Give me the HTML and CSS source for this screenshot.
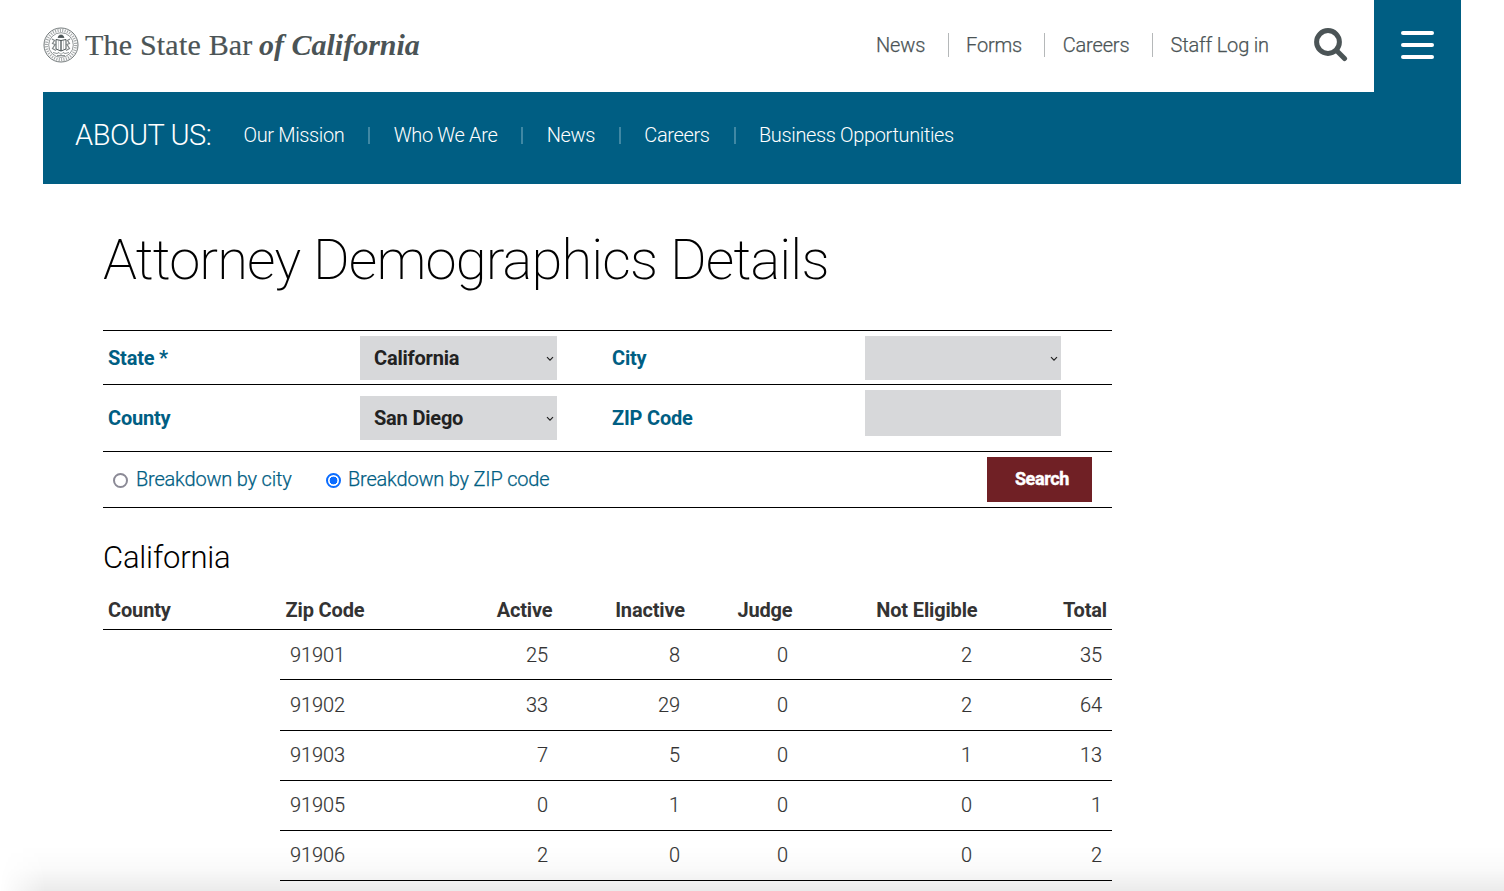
FILE: index.html
```html
<!DOCTYPE html>
<html lang="en">
<head>
<meta charset="utf-8">
<title>Attorney Demographics Details</title>
<link rel="stylesheet" href="styles.css">
</head>
<body>
<div class="page">
  <header class="header">
    <a class="brand">
      <svg class="seal" viewBox="0 0 36 36" fill="none" stroke="#4b5456">
        <circle cx="18" cy="18" r="17" stroke-width=".8"/>
        <circle cx="18" cy="18" r="14.6" stroke-width="3" stroke-dasharray="1.1 1.3" opacity=".5"/>
        <circle cx="18" cy="18" r="12.3" stroke-width=".6"/>
        <path d="M9 12l2.500 1.500-2 3 2.500 1-2.500 4 3.500 2M27 12l-2.500 1.500 2 3-2.500 1 2.500 4-3.500 2" stroke-width="1.200" opacity=".7"/>
        <path d="M13 12.500l5 1 5-1v9.500l-5 2-5-2z" fill="#fff" stroke-width="1"/>
        <path d="M18 13.500v10.500" stroke-width="1.300"/>
        <path d="M15.500 13.500v8.500M20.500 13.500v8.500" stroke-width=".5" opacity=".6"/>
        <path d="M15 10.500q1-3 3-2.500 2-.5 3 2.500z" fill="#4b5456" stroke-width=".8"/>
        <path d="M10 25.500l4 1 2-1 2 2 2-2 2 1 4-1M14 28.500h8" stroke-width=".9" opacity=".7"/>
      </svg>
      <span class="brand-name">The State Bar</span><span class="brand-place">of California</span>
    </a>
    <nav class="top-nav">
      <a class="top-link link-news">News</a>
      <a class="top-link link-forms">Forms</a>
      <a class="top-link link-careers">Careers</a>
      <a class="top-link link-staff">Staff Log in</a>
    </nav>
    <svg class="search-icon" viewBox="0 0 34 34" fill="none" stroke="#4b5456">
      <circle cx="14" cy="14" r="11.400" stroke-width="5"/>
      <path d="M22.500 22.500L30.500 30.500" stroke-width="5" stroke-linecap="round"/>
    </svg>
    <div class="menu"><span class="bar"></span><span class="bar"></span><span class="bar"></span></div>
  </header>
  <nav class="about">
    <span class="about-title">ABOUT US:</span>
    <a class="about-link">Our Mission</a><span class="pipe"></span>
    <a class="about-link">Who We Are</a><span class="pipe"></span>
    <a class="about-link">News</a><span class="pipe"></span>
    <a class="about-link">Careers</a><span class="pipe"></span>
    <a class="about-link">Business Opportunities</a>
  </nav>
  <main class="content">
    <h1 class="title">Attorney Demographics Details</h1>
    <form class="filters">
      <div class="row row-state">
        <label class="label">State *</label>
        <div class="field"><span>California</span><svg class="chev" viewBox="0 0 8 6"><path d="M1 1.200l3 3 3-3" fill="none" stroke="#222" stroke-width="1.200"/></svg></div>
        <label class="label label-right">City</label>
        <div class="field"><span></span><svg class="chev" viewBox="0 0 8 6"><path d="M1 1.200l3 3 3-3" fill="none" stroke="#222" stroke-width="1.200"/></svg></div>
      </div>
      <div class="row row-county">
        <label class="label">County</label>
        <div class="field"><span>San Diego</span><svg class="chev" viewBox="0 0 8 6"><path d="M1 1.200l3 3 3-3" fill="none" stroke="#222" stroke-width="1.200"/></svg></div>
        <label class="label label-right">ZIP Code</label>
        <div class="field field-zip"></div>
      </div>
      <div class="row-options">
        <span class="radio"></span><label class="option option-city">Breakdown by city</label>
        <span class="radio radio-on"></span><label class="option option-zip">Breakdown by ZIP code</label>
        <button class="search-button" type="button">Search</button>
      </div>
    </form>
    <h2 class="region">California</h2>
    <div class="table">
      <div class="thead"><span class="left">County</span><span class="left">Zip Code</span><span>Active</span><span>Inactive</span><span>Judge</span><span>Not Eligible</span><span>Total</span></div>
      <div class="trow"><span class="left">91901</span><span>25</span><span>8</span><span>0</span><span>2</span><span>35</span></div>
      <div class="trow"><span class="left">91902</span><span>33</span><span>29</span><span>0</span><span>2</span><span>64</span></div>
      <div class="trow trow-tight"><span class="left">91903</span><span>7</span><span>5</span><span>0</span><span>1</span><span>13</span></div>
      <div class="trow trow-tight"><span class="left">91905</span><span>0</span><span>1</span><span>0</span><span>0</span><span>1</span></div>
      <div class="trow trow-tight"><span class="left">91906</span><span>2</span><span>0</span><span>0</span><span>0</span><span>2</span></div>
    </div>
  </main>
</div>
<div class="edge-shade"></div>
</body>
</html>
```

FILE: styles.css
```css
* { box-sizing: border-box; }
body {
  margin: 0;
  height: 891px;
  overflow: hidden;
  background: #fff;
  color: #333;
  font-family: Roboto, "Liberation Sans", sans-serif;
  font-size: 20px;
  font-weight: 300;
}
.page { width: 1418px; margin-left: 43px; }
.header { display: flex; height: 92px; }
.brand {
  display: flex;
  width: 833px;
  height: 90px;
  align-items: center;
  color: #4b5456;
  font-family: "Liberation Serif", serif;
  font-size: 30px;
  font-weight: 400;
  white-space: nowrap;
}
.seal { width: 36px; height: 36px; margin-right: 6px; }
.brand-name { width: 174px; letter-spacing: .2px; -webkit-text-stroke: .2px #4b5456; }
.brand-place { font-style: italic; font-weight: 700; }
.top-nav { display: flex; height: 24px; margin-top: 33px; width: 438px; line-height: 24px; color: #4b5456; white-space: nowrap; letter-spacing: -.16px; -webkit-text-stroke: .25px; }
.top-link + .top-link { border-left: 1px solid #b5b8b9; padding-left: 17px; }
.link-news { width: 72px; }
.link-forms { width: 96px; }
.top-nav .link-careers { width: 108px; padding-left: 17.700px; }
.top-nav .link-staff { padding-left: 17.500px; }
.search-icon { width: 34px; height: 34px; margin-top: 28px; }
.menu {
  display: flex;
  flex-direction: column;
  gap: 8px;
  width: 87px;
  height: 92px;
  margin-left: auto;
  padding: 31px 0 0 27px;
  background: #005e83;
}
.bar { width: 33px; height: 4px; border-radius: 2px; background: #fff; }
.about { display: flex; height: 92px; padding-left: 32px; background: #005e83; color: #fff; line-height: 86px; white-space: nowrap; letter-spacing: -.36px; }
.about-title { width: 168.500px; font-size: 29px; letter-spacing: -.5px; }
.pipe { width: 2px; height: 17px; margin: 35px 23.300px 0 24px; background: #4088a4; }
.content { width: 1009px; margin-left: 60px; }
.title { height: 146px; margin: 0; padding-top: 43px; color: #000; font-size: 56px; font-weight: 200; line-height: 66px; white-space: nowrap; letter-spacing: -.85px; }
.filters { border-top: 1px solid #000; color: #005e83; }
.row { display: grid; grid-template-columns: 257px 197px 308px 196px; border-bottom: 1px solid #000; }
.row-state { height: 54px; padding-top: 5px; }
.row-county { height: 67px; padding-top: 5px; }
.label { padding-left: 5px; font-weight: 700; line-height: 44px; letter-spacing: -.2px; }
.label-right { padding-left: 55px; }
.row-county .label { line-height: 56px; }
.field { display: flex; align-items: center; justify-content: space-between; height: 44px; padding: 0 3.500px 0 14px; background: #d7d8da; color: #222; font-weight: 700; letter-spacing: -.2px; }
.row-county .field { margin-top: 6px; }
.row-county .field-zip { height: 46px; margin-top: 0; }
.chev { width: 8px; height: 6px; margin-top: 1px; }
.row-options { display: flex; height: 56px; padding: 5px 20px 0 10px; border-bottom: 1px solid #000; line-height: 44px; }
.radio { width: 15px; height: 15px; margin: 16px 8px 0 0; border: 2px solid #8b8a96; border-radius: 50%; background: #fff; }
.radio-on { margin-right: 7px; border-color: #0a6cff; background: radial-gradient(circle, #0a6cff 3.600px, #fff 4.200px); }
.option { letter-spacing: -.2px; -webkit-text-stroke: .25px; }
.option-city { width: 190px; }
.search-button { width: 105px; height: 45px; margin-left: auto; padding: 0 0 2px 5px; border: 0; background: #702025; color: #fff; font: 700 18px/43px Roboto, sans-serif; letter-spacing: -.35px; -webkit-text-stroke: .4px #fff; }
.region { height: 83px; margin: 0; padding-top: 32px; color: #000; font-size: 31px; font-weight: 300; line-height: 36px; letter-spacing: -.2px; }
.thead, .trow { display: grid; border-bottom: 1px solid #000; text-align: right; }
.thead { grid-template-columns: 177.500px 109px 163px 132.500px 107.500px 185px 129.500px; height: 39px; line-height: 38px; font-weight: 700; padding-right: 5px; letter-spacing: -.15px; }
.thead .left { padding-left: 5px; }
.left { text-align: left; }
.trow { grid-template-columns: 110px 158px 132px 108px 184px 130px; height: 50.250px; margin-left: 177px; line-height: 50px; padding-right: 10px; letter-spacing: -.1px; -webkit-text-stroke: .15px; }
.trow-tight { line-height: 49px; }
.trow .left { padding-left: 10px; }
.edge-shade {
  position: absolute;
  left: 0;
  bottom: 0;
  width: 1504px;
  height: 45px;
  background: linear-gradient(to bottom, rgba(0,0,0,0), rgba(0,0,0,.02) 50%, rgba(0,0,0,.08));
  -webkit-mask-image: linear-gradient(to right, transparent, #000 45px);
}
```
